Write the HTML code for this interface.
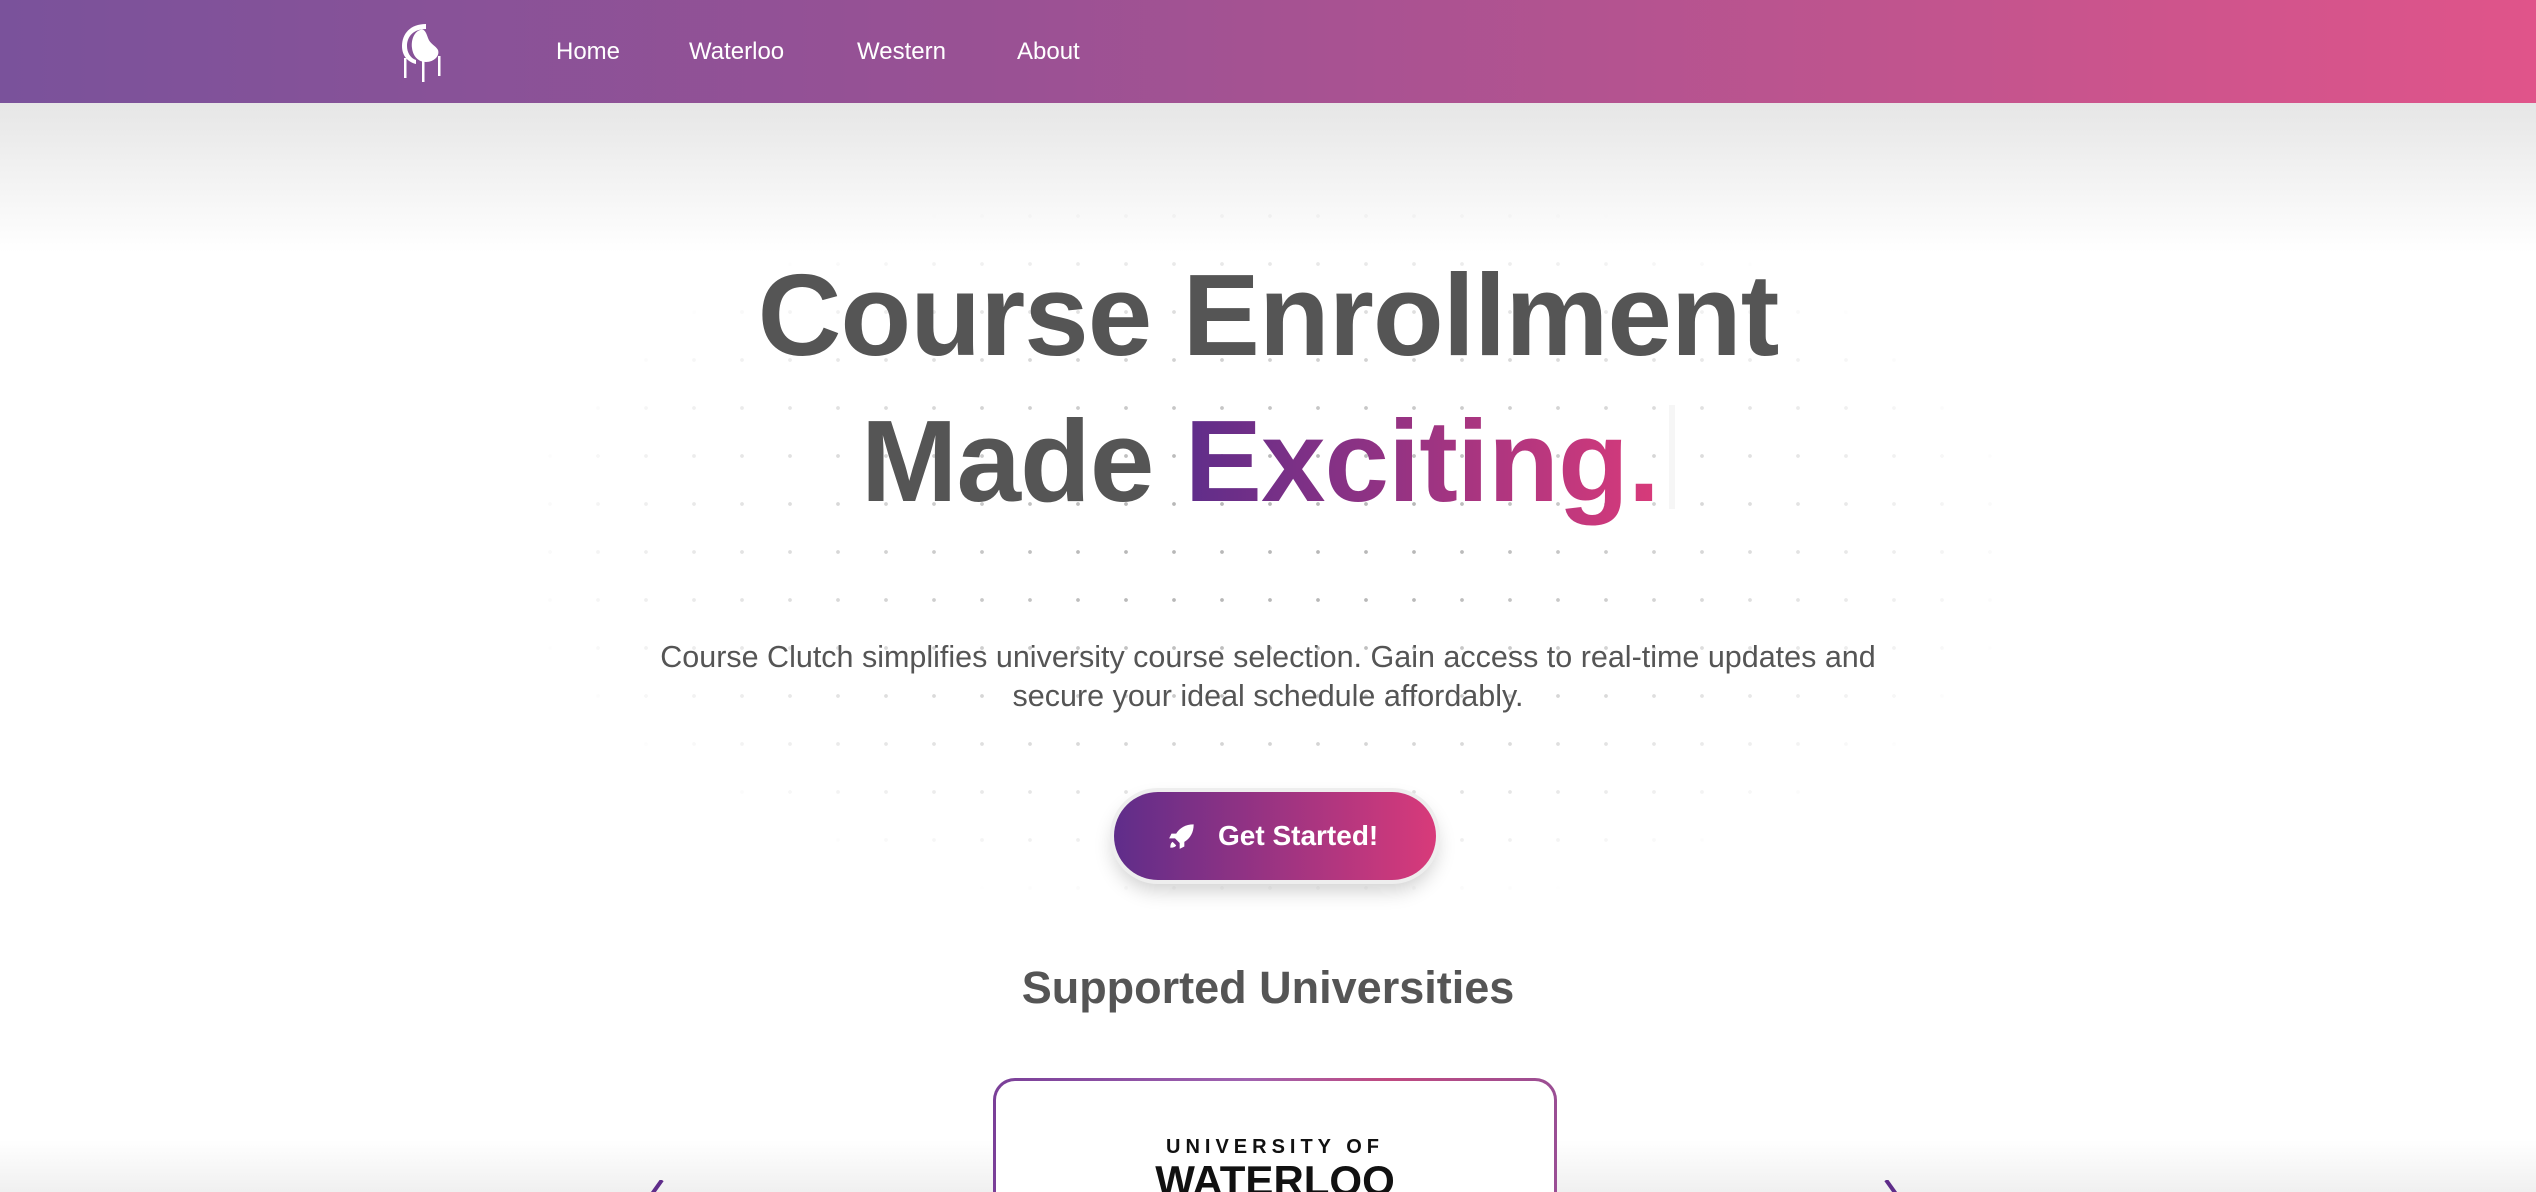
<!DOCTYPE html>
<html><head><meta charset="utf-8"><style>
*{margin:0;padding:0;box-sizing:border-box}
html,body{width:2536px;height:1192px;overflow:hidden;background:#fff;font-family:"Liberation Sans",sans-serif;position:relative}
.nav{position:absolute;left:0;top:0;width:2536px;height:103px;background:linear-gradient(90deg,#7a529b 0%,#9a5194 40%,#c0548e 75%,#e0548a 100%);z-index:3}
.nav a{position:absolute;top:38px;color:#fff;font-size:24px;text-decoration:none}
.shade{position:absolute;left:0;top:103px;width:2536px;height:150px;background:linear-gradient(#e6e6e6,rgba(255,255,255,0));z-index:1}
.bshade{position:absolute;left:0;top:1140px;width:2536px;height:52px;background:linear-gradient(rgba(255,255,255,0),#f0f0f0);z-index:1}
.dots{position:absolute;left:420px;top:130px;width:1700px;height:830px;background-image:radial-gradient(circle,#b8b8b8 1.6px,transparent 2.2px);background-size:48px 48px;background-position:10px 14px;-webkit-mask-image:radial-gradient(ellipse 50% 50% at 50% 50%,#000 20%,transparent 90%);mask-image:radial-gradient(ellipse 50% 50% at 50% 50%,#000 20%,transparent 90%);z-index:0}
h1{position:absolute;left:0;width:2536px;text-align:center;font-size:116px;font-weight:bold;color:#555;line-height:150px;z-index:2;letter-spacing:-1px}
.grad{background:linear-gradient(90deg,#5f2d8a,#d83a7a);-webkit-background-clip:text;background-clip:text;color:transparent}
p.sub{position:absolute;left:0;top:638px;width:2536px;text-align:center;font-size:30.5px;line-height:39px;color:#555;z-index:2}
.btn{position:absolute;left:1114px;top:792px;width:322px;height:88px;border-radius:44px;background:linear-gradient(90deg,#5f2d8a,#d83a7a);box-shadow:0 0 0 4px #eee,0 10px 20px rgba(0,0,0,.2);color:#fff;font-weight:bold;font-size:28px;z-index:2}
.btn span{position:absolute;left:104px;top:28px}
h2{position:absolute;left:0;top:962px;width:2536px;text-align:center;font-size:45px;font-weight:bold;color:#555;z-index:2}
.card{position:absolute;left:993px;top:1078px;width:564px;height:114px;border-radius:22px 22px 0 0;padding:3px 3px 0 3px;background:linear-gradient(90deg,#7a3f98,#a063b0 45%,#c04a80 70%,#9a4e94);z-index:2;overflow:hidden}
.card>div{width:100%;height:100%;background:#fff;border-radius:19px 19px 0 0;text-align:center;color:#111;overflow:hidden}
</style></head><body>
<div class="nav">
<svg style="position:absolute;left:398px;top:20px" width="48" height="62" viewBox="0 0 48 62">
<path d="M28 4 C12 4 4 14 4 26 C4 36 10 42 18 44 L18 40 C12 38 9 32 9 26 C9 16 16 9 28 9 Z" fill="#fff"/>
<path d="M22 10 C16 12 13 20 14 28 C15 36 20 42 28 42 C36 42 42 36 40 30 C38 26 32 24 30 18 C28 12 26 8 22 10 Z" fill="#fff"/>
<rect x="6" y="38" width="2.5" height="20" fill="#fff"/><rect x="24" y="40" width="2.5" height="22" fill="#fff"/><rect x="40" y="36" width="2.5" height="20" fill="#fff"/>
</svg>
<a style="left:556px">Home</a><a style="left:689px">Waterloo</a><a style="left:857px">Western</a><a style="left:1017px">About</a>
</div>
<div class="shade"></div>
<div class="dots"></div>
<h1 style="top:240px">Course Enrollment</h1>
<h1 style="top:386px">Made <span class="grad">Exciting.</span><span style="display:inline-block;width:6px;height:104px;background:#f6f6f6;vertical-align:-8px;margin-left:10px"></span></h1>
<p class="sub">Course Clutch simplifies university course selection. Gain access to real-time updates and<br>secure your ideal schedule affordably.</p>
<div class="btn"><svg style="position:absolute;left:54px;top:30px" width="28" height="28" viewBox="0 0 24 24"><path d="M22 2 C15 2 10 5 7 10 L3 10 L1 14 L6 14 L10 18 L10 23 L14 21 L14 17 C19 14 22 9 22 2 Z M4 17 C2 18 2 21 2 22 C3 22 6 22 7 20 Z" fill="#fff"/></svg><span>Get Started!</span></div>
<h2>Supported Universities</h2>
<div class="card"><div><div style="padding-top:54px;font-size:20px;font-weight:bold;letter-spacing:5px;line-height:24px">UNIVERSITY OF</div><div style="font-size:42px;font-weight:bold;line-height:44px">WATERLOO</div></div></div>
<svg style="position:absolute;left:648px;top:1180px;z-index:2" width="20" height="12"><path d="M14 0 L4 14" stroke="#5f2d8a" stroke-width="4"/></svg>
<svg style="position:absolute;left:1882px;top:1180px;z-index:2" width="20" height="12"><path d="M4 0 L14 14" stroke="#5f2d8a" stroke-width="4"/></svg>
<div class="bshade"></div>
</body></html>
